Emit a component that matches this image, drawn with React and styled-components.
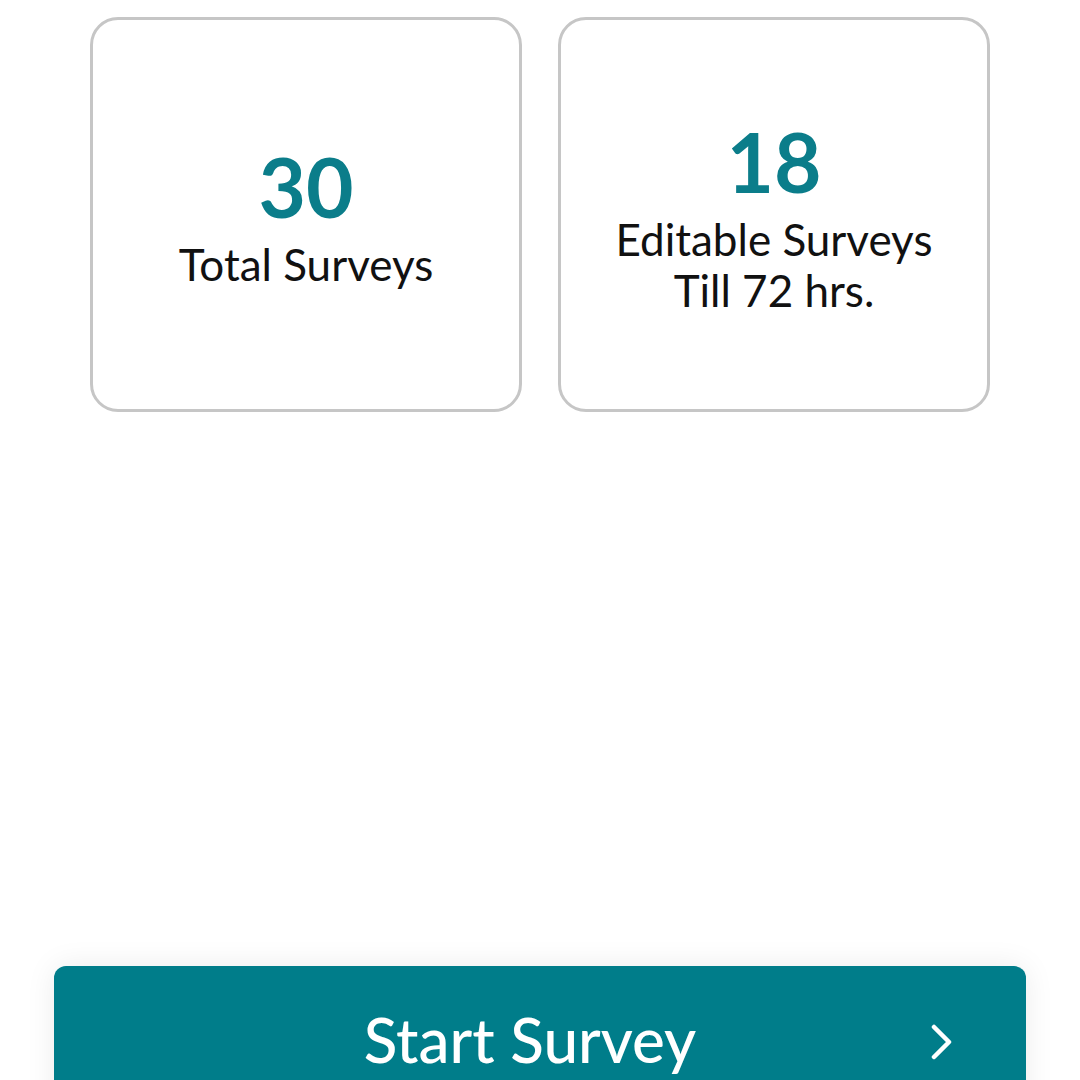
import styled, { createGlobalStyle } from "styled-components";

const GlobalStyle = createGlobalStyle`
    * {
        box-sizing: border-box;
    }

    body {
        margin: 0;
        background: #ffffff;
        font-family: Lato, "Open Sans", sans-serif;
    }
`;

const stats = [
    { value: 30, label: ["Total Surveys"] },
    { value: 18, label: ["Editable Surveys", "Till 72 hrs."] },
];

export default function App() {
    return (
        <>
            <GlobalStyle />
            <Page>
                <StatsRow>
                    {stats.map((s) => (
                        <StatCard key={s.value}>
                            <Value>{s.value}</Value>
                            <Label>
                                {s.label.map((line) => (
                                    <span key={line}>{line}</span>
                                ))}
                            </Label>
                        </StatCard>
                    ))}
                </StatsRow>

                <Footer>
                    <StartButton>
                        <span>Start Survey</span>
                        <Chevron viewBox="0 0 24 36" aria-hidden="true">
                            <path d="M4 3 L19 18 L4 33" />
                        </Chevron>
                    </StartButton>
                </Footer>
            </Page>
        </>
    );
}

const Page = styled.div`
    height: 100vh;
    overflow: hidden;
    display: flex;
    flex-direction: column;
`;

const StatsRow = styled.div`
    display: flex;
    justify-content: center;
    column-gap: 36px;
    padding-top: 17px;
`;

const StatCard = styled.div`
    width: 432px;
    height: 395px;
    border: 3px solid #c6c6c6;
    border-radius: 28px;

    display: flex;
    flex-direction: column;
    justify-content: center;
    align-items: center;
    padding-top: 6px;
`;

const Value = styled.div`
    font-size: 82px;
    font-weight: 700;
    line-height: 1;
    color: #0b7d8a;
    margin-bottom: 12px;
`;

const Label = styled.div`
    display: flex;
    flex-direction: column;
    align-items: center;
    font-size: 44px;
    line-height: 51px;
    color: #111111;
`;

const Footer = styled.div`
    margin-top: 554px;
    display: flex;
    justify-content: center;
`;

const StartButton = styled.button`
    width: 972px;
    height: 170px;
    border: none;
    border-radius: 12px;
    background: #007d8a;
    box-shadow: 0 0 30px rgba(0, 0, 0, 0.08);
    position: relative;

    display: flex;
    justify-content: center;
    align-items: flex-start;
    padding: 42px 20px 0 0;

    font-family: Lato, "Open Sans", sans-serif;
    font-size: 62px;
    font-weight: 500;
    line-height: 1;
    color: #ffffff;
`;

const Chevron = styled.svg`
    position: absolute;
    right: 72px;
    top: 58px;
    width: 24px;
    height: 36px;
    fill: none;
    stroke: #ffffff;
    stroke-width: 4.5;
    stroke-linecap: round;
    stroke-linejoin: round;
`;
